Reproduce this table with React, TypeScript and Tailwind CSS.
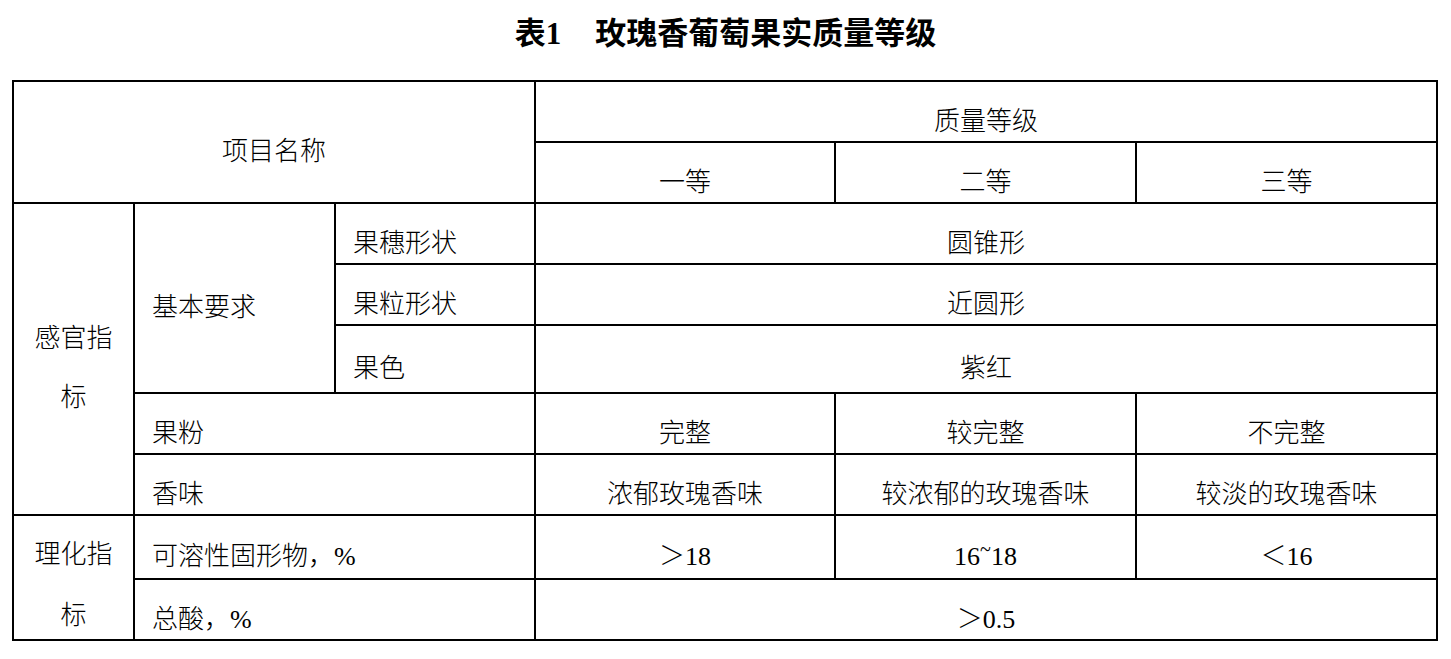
import React from 'react'

const FONT = { fontFamily: '"Liberation Serif", "Noto Sans CJK SC", serif' }

const base = 'border-2 border-black p-0 align-middle font-light'
const center = `${base} pt-5 text-center`
const left = `${base} pt-5 text-left pl-[17px]`
const group = `${base} text-center`

export default function App() {
  return (
    <div className="min-h-screen bg-white text-black" style={FONT}>
      {/* Title */}
      <div className="h-[80px] pt-[14px] text-center text-[31px] leading-[40px] font-bold">
        表1<span className="inline-block w-[34px]" />玫瑰香葡萄果实质量等级
      </div>

      <table className="ml-[12px] border-collapse text-[26px] leading-[30px]">
        <colgroup>
          <col className="w-[121px]" />
          <col className="w-[201px]" />
          <col className="w-[200px]" />
          <col className="w-[300px]" />
          <col className="w-[301px]" />
          <col className="w-[301px]" />
        </colgroup>
        <tbody>
          <tr className="h-[61px]">
            <td className={center} colSpan={3} rowSpan={2}>项目名称</td>
            <td className={center} colSpan={3}>质量等级</td>
          </tr>
          <tr className="h-[61px]">
            <td className={center}>一等</td>
            <td className={center}>二等</td>
            <td className={center}>三等</td>
          </tr>

          {/* 感官指标 */}
          <tr className="h-[61px]">
            <td className={group} rowSpan={5}>
              <div className="flex flex-col items-center gap-[29px] pt-[18px]">
                <span>感官指</span>
                <span>标</span>
              </div>
            </td>
            <td className={left} rowSpan={3}>基本要求</td>
            <td className={left}>果穗形状</td>
            <td className={center} colSpan={3}>圆锥形</td>
          </tr>
          <tr className="h-[61px]">
            <td className={left}>果粒形状</td>
            <td className={center} colSpan={3}>近圆形</td>
          </tr>
          <tr className="h-[68px]">
            <td className={left}>果色</td>
            <td className={center} colSpan={3}>紫红</td>
          </tr>
          <tr className="h-[61px]">
            <td className={left} colSpan={2}>果粉</td>
            <td className={center}>完整</td>
            <td className={center}>较完整</td>
            <td className={center}>不完整</td>
          </tr>
          <tr className="h-[61px]">
            <td className={left} colSpan={2}>香味</td>
            <td className={center}>浓郁玫瑰香味</td>
            <td className={center}>较浓郁的玫瑰香味</td>
            <td className={center}>较淡的玫瑰香味</td>
          </tr>

          {/* 理化指标 */}
          <tr className="h-[64px]">
            <td className={group} rowSpan={2}>
              <div className="flex flex-col items-center gap-[31px] pt-[16px]">
                <span>理化指</span>
                <span>标</span>
              </div>
            </td>
            <td className={left} colSpan={2}>可溶性固形物，%</td>
            <td className={center}>＞18</td>
            <td className={center}>
              16<span className="inline-block -translate-y-[9px] text-[20px]">~</span>18
            </td>
            <td className={center}>＜16</td>
          </tr>
          <tr className="h-[61px]">
            <td className={left} colSpan={2}>总酸，%</td>
            <td className={center} colSpan={3}>＞0.5</td>
          </tr>
        </tbody>
      </table>
    </div>
  )
}
